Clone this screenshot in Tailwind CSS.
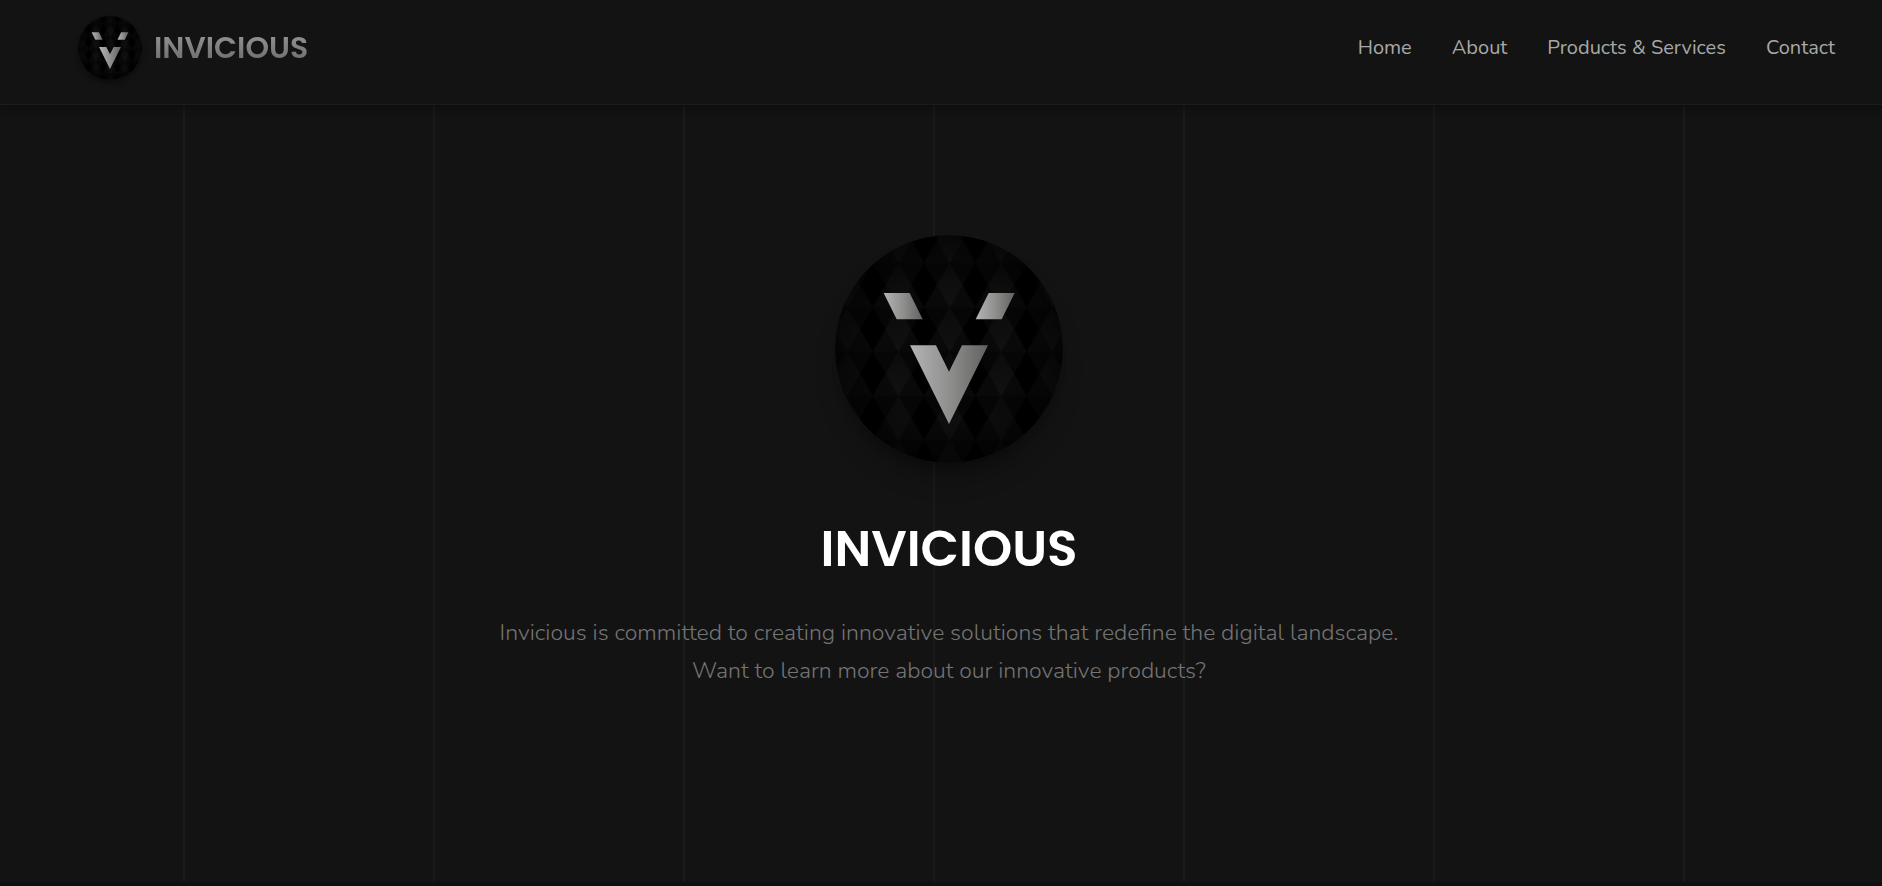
<!DOCTYPE html>
<html lang="en">
<head>
<meta charset="utf-8">
<meta name="viewport" content="width=device-width, initial-scale=1">
<title>Invicious</title>
<script src="https://cdn.jsdelivr.net/npm/@tailwindcss/browser@4"></script>
</head>
<body class="flex min-h-screen flex-col bg-[#131313] font-['Nunito','Nunito_Sans','Open_Sans',sans-serif]">
<svg class="absolute size-0" aria-hidden="true">
  <defs>
    <linearGradient id="silver"><stop offset="0" stop-color="#b4b4b4"/><stop offset=".5" stop-color="#8f8f8e"/><stop offset="1" stop-color="#62615e"/></linearGradient>
    <linearGradient id="facet" x2="0" y2="1"><stop offset="0" stop-color="#0b0b0b"/><stop offset="1" stop-color="#111"/></linearGradient>
    <pattern id="facets" width="154" height="133" patternUnits="userSpaceOnUse" x="75" y="84">
      <rect width="154" height="133" fill="#060606"/>
      <path d="M-1 66H155V133H-1z" fill="#090909"/>
      <path d="M38 0L77 66L38 133L0 66z" fill="#000"/>
      <path d="M115 0L154 66L115 133L77 66z" fill="url(#facet)"/>
    </pattern>
    <radialGradient id="shade"><stop offset=".6" stop-color="#000" stop-opacity="0"/><stop offset="1" stop-color="#000" stop-opacity=".5"/></radialGradient>
    <symbol id="logo" viewBox="0 0 684 684">
      <circle cx="342" cy="342" r="342" fill="url(#facets)"/>
      <circle cx="342" cy="342" r="342" fill="url(#shade)"/>
      <path d="M146 174h78l39 79h-78z" fill="url(#silver)"/>
      <path d="M461 174h78l-39 79h-78z" fill="url(#silver)"/>
      <path d="M225 331h78l39 79l39-79h78L342 567z" fill="url(#silver)"/>
    </symbol>
  </defs>
</svg>
<header class="z-10 flex h-[105px] items-start justify-between border-b border-[#1c1c1c] bg-[#131313] pt-4 pr-[47px] pl-[78px] shadow-[0_2px_8px_#00000066]">
  <a href="#" class="flex h-16 items-center gap-3">
    <svg class="size-16 rounded-full shadow-md shadow-black/30" aria-hidden="true"><use href="#logo"/></svg>
    <span class="bg-linear-to-b from-[#a0a0a0] to-[#606060] bg-clip-text pb-0.5 font-['Poppins','Inter',sans-serif] text-[30px] font-semibold text-transparent">INVICIOUS</span>
  </a>
  <nav class="flex h-16 items-center gap-10 text-[20px] text-[#a8a8a8]">
    <a href="#">Home</a><a href="#">About</a><a href="#">Products &amp; Services</a><a href="#">Contact</a>
  </nav>
</header>
<main class="flex flex-1 flex-col items-center border-b-4 border-[#101010] bg-[repeating-linear-gradient(90deg,transparent_0_183px,#1a1a1a_183px_185px,transparent_185px_250px)] pt-[130px] text-center">
  <svg class="ml-4 size-57 rounded-full shadow-xl shadow-black/25" aria-hidden="true"><use href="#logo"/></svg>
  <h1 class="mt-12 ml-4 font-['Poppins','Inter',sans-serif] text-[50px] font-semibold text-white">INVICIOUS</h1>
  <p class="mt-7 ml-4 text-[23px] leading-[38px] font-light text-[#747474]">Invicious is committed to creating innovative solutions that redefine the digital landscape.<br>Want to learn more about our innovative products?</p>
</main>
</body>
</html>
